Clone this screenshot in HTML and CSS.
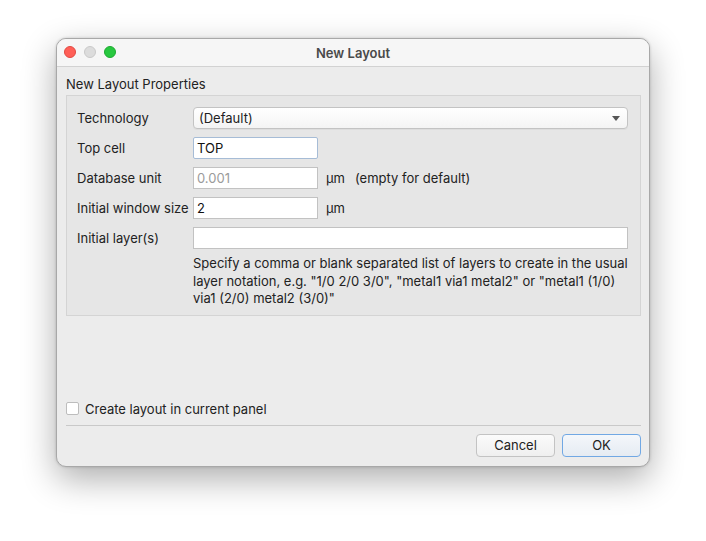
FILE: index.html
```html
<!DOCTYPE html>
<html>
<head>
<meta charset="utf-8">
<link rel="stylesheet" href="styles.css">
</head>
<body>
<div class="window">
  <div class="titlebar">
    <div class="lights">
      <span class="light red"></span>
      <span class="light gray"></span>
      <span class="light green"></span>
    </div>
    <div class="title">New Layout</div>
  </div>
  <div class="content">
    <div class="group-title">New Layout Properties</div>
    <div class="group">
      <div class="row">
        <div class="label">Technology</div>
        <div class="combo">(Default)<span class="arrow"></span></div>
      </div>
      <div class="row">
        <div class="label">Top cell</div>
        <div class="input short focus">TOP</div>
      </div>
      <div class="row">
        <div class="label">Database unit</div>
        <div class="input short placeholder">0.001</div>
        <div class="unit">µm</div>
        <div class="note">(empty for default)</div>
      </div>
      <div class="row">
        <div class="label">Initial window size</div>
        <div class="input short">2</div>
        <div class="unit">µm</div>
      </div>
      <div class="row">
        <div class="label">Initial layer(s)</div>
        <div class="input wide"></div>
      </div>
      <div class="help">Specify a comma or blank separated list of layers to create in the usual layer notation, e.g. "1/0 2/0 3/0", "metal1 via1 metal2" or "metal1 (1/0) via1 (2/0) metal2 (3/0)"</div>
    </div>
    <div class="bottom">
      <label class="check"><span class="box"></span>Create layout in current panel</label>
      <div class="sep"></div>
      <div class="buttons">
        <div class="btn">Cancel</div>
        <div class="btn default">OK</div>
      </div>
    </div>
  </div>
</div>
</body>
</html>
```

FILE: styles.css
```css
html, body {
  margin: 0;
  padding: 0;
  background: #ffffff;
}
html { height: 100%; }
body {
  min-height: 100%;
  box-sizing: border-box;
  padding: 38px 0 0 56px;
  font-family: Inter, "Liberation Sans", Arial, sans-serif;
  font-size: 13px;
  color: #222;
}
.window {
  width: 594px;
  height: 429px;
  box-sizing: border-box;
  border: 1px solid #a8a8a8;
  border-radius: 10px;
  background: #ececec;
  box-shadow: 0 12px 34px rgba(0,0,0,0.32), 0 0 3px rgba(0,0,0,0.18);
  overflow: hidden;
  display: flex;
  flex-direction: column;
}
.titlebar {
  height: 27px;
  flex: none;
  background: #f6f6f6;
  border-bottom: 1px solid #d2d2d2;
  position: relative;
  display: flex;
  align-items: center;
  justify-content: center;
}
.lights {
  position: absolute;
  left: 7px;
  top: 7px;
  display: flex;
  gap: 8px;
}
.light {
  width: 12px;
  height: 12px;
  border-radius: 50%;
  box-sizing: border-box;
}
.red { background: #ff5f57; border: 1px solid #e14942; }
.gray { background: #dcdcdc; border: 1px solid #c9c9c9; }
.green { background: #28c840; border: 1px solid #1eaa31; }
.title {
  font-weight: 600;
  color: #4a4a4a;
  font-size: 13px;
}
.content {
  flex: 1;
  display: flex;
  flex-direction: column;
  padding: 0 8px 9px 9px;
}
.group-title {
  margin-top: 8px;
  height: 18px;
  line-height: 18px;
  color: #222;
}
.group {
  margin-top: 2px;
  border: 1px solid #d4d4d4;
  background: #e6e6e6;
  padding: 11px 12px 7px 10px;
  display: flex;
  flex-direction: column;
  gap: 8px;
}
.row {
  display: flex;
  align-items: center;
  height: 22px;
}
.label {
  width: 116px;
  flex: none;
  color: #222;
  white-space: nowrap;
}
.combo {
  flex: 1;
  height: 22px;
  box-sizing: border-box;
  border: 1px solid #c3c3c3;
  border-radius: 4px;
  background: linear-gradient(#ffffff, #f4f4f4);
  padding: 0 5px;
  line-height: 20px;
  position: relative;
  box-shadow: 0 1px 0 rgba(0,0,0,0.04);
}
.arrow {
  position: absolute;
  right: 7px;
  top: 8px;
  width: 0;
  height: 0;
  border-left: 4px solid transparent;
  border-right: 4px solid transparent;
  border-top: 5px solid #555;
}
.input {
  height: 22px;
  box-sizing: border-box;
  border: 1px solid #c2c2c2;
  background: #fff;
  padding: 0 3px;
  line-height: 20px;
  color: #111;
}
.input.short { width: 125px; flex: none; }
.input.wide { flex: 1; }
.input.focus { border-color: #a6bcd6; border-radius: 2px; }
.input.placeholder { color: #9b9b9b; }
.unit {
  margin-left: 8px;
  width: 29px;
}
.note { color: #222; }
.help {
  margin-top: -2px;
  padding-left: 116px;
  line-height: 17.5px;
  color: #222;
}
.bottom {
  margin-top: auto;
  display: flex;
  flex-direction: column;
}
.check {
  display: flex;
  align-items: center;
  height: 13px;
  gap: 6px;
}
.box {
  width: 13px;
  height: 13px;
  box-sizing: border-box;
  border: 1px solid #bdbdbd;
  border-radius: 2px;
  background: #fff;
}
.sep {
  margin-top: 10px;
  height: 1px;
  background: #c9c9c9;
}
.buttons {
  margin-top: 8px;
  display: flex;
  justify-content: flex-end;
  gap: 7px;
}
.btn {
  width: 79px;
  height: 23px;
  box-sizing: border-box;
  border: 1px solid #c3c3c3;
  border-radius: 4px;
  background: linear-gradient(#fbfbfb, #efefef);
  text-align: center;
  line-height: 21px;
  color: #222;
}
.btn.default {
  border-color: #71a8e4;
  background: linear-gradient(#f4f7fb, #e5ebf2);
}
```
